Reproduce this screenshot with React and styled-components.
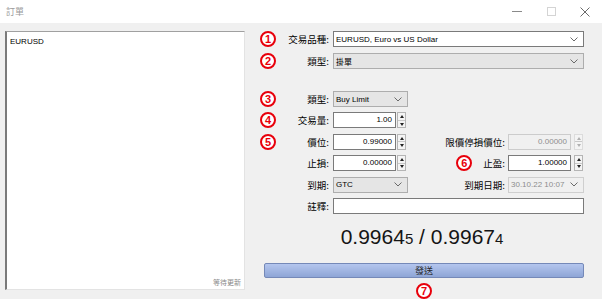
import React from "react";
import styled, { createGlobalStyle } from "styled-components";

const Global = createGlobalStyle`
  html, body { margin: 0; padding: 0; background: #fff; }
  body { width: 602px; height: 308px; overflow: hidden; font-family: "Liberation Sans", Arial, sans-serif; }
`;

const CJK = `"Noto Sans CJK TC", "Noto Sans CJK SC", sans-serif`;

const Window = styled.div`
  width: 602px;
  height: 308px;
  display: flex;
  flex-direction: column;
  background: #fff;
`;

const TitleBar = styled.div`
  height: 23px;
  flex: none;
  display: flex;
  align-items: center;
  padding-left: 6px;
`;

const Title = styled.div`
  font-family: ${CJK};
  font-size: 9px;
  color: #9a9a9a;
  flex: 1;
  line-height: 1;
`;

const Controls = styled.div`
  display: flex;
  height: 100%;
`;

const Ctrl = styled.div`
  width: 34px;
  height: 100%;
  display: flex;
  align-items: center;
  justify-content: center;
`;

const MinLine = styled.div`
  width: 10px;
  height: 1px;
  background: #8a8a8a;
`;

const MaxBox = styled.div`
  width: 7px;
  height: 7px;
  border: 1px solid #d4d4d4;
`;

const Body = styled.div`
  height: 276px;
  flex: none;
  background: #f0f0f0;
  display: flex;
  gap: 15px;
  padding: 8px 18px 0 5px;
  box-sizing: border-box;
`;

const SymbolList = styled.div`
  width: 240px;
  height: 259px;
  flex: none;
  box-sizing: border-box;
  background: #fff;
  border-top: 1px solid #a0a0a0;
  border-left: 2px solid #7a7a7a;
  border-right: 1px solid #e3e3e3;
  border-bottom: 1px solid #e3e3e3;
  display: flex;
  flex-direction: column;
  justify-content: space-between;
  padding: 5px 3px 2px 3px;
`;

const ListItem = styled.div`
  font-size: 8px;
  color: #000;
  line-height: 10px;
`;

const ListStatus = styled.div`
  font-family: ${CJK};
  font-size: 7px;
  color: #8a8a8a;
  text-align: right;
  line-height: 9px;
`;

const Form = styled.div`
  flex: 1;
  display: flex;
  flex-direction: column;
  min-width: 0;
`;

const Group = styled.div`
  display: flex;
  flex-direction: column;
  gap: ${(p) => p.$gap}px;
  margin-top: ${(p) => p.$mt || 0}px;
`;

const Row = styled.div`
  display: flex;
  align-items: center;
  height: 16px;
`;

const LeftCell = styled.div`
  display: flex;
  align-items: center;
  width: 148px;
  flex: none;
`;

const MarkerSlot = styled.div`
  width: 16px;
  flex: none;
  display: flex;
  justify-content: center;
`;

const Marker = styled.div`
  width: 12px;
  height: 12px;
  border: 2px solid #e8000b;
  border-radius: 50%;
  background: #fff;
  color: #e8000b;
  font-family: "Liberation Sans", Arial, sans-serif;
  font-weight: bold;
  font-size: 11px;
  line-height: 12px;
  text-align: center;
  flex: none;
`;

const Label = styled.div`
  width: 53px;
  margin-right: 4px;
  flex: none;
  text-align: right;
  font-family: ${CJK};
  font-size: 9.5px;
  color: #000;
  white-space: nowrap;
  line-height: 16px;
`;

const RightLabel = styled.div`
  width: 97px;
  margin-right: 3px;
  flex: none;
  display: flex;
  justify-content: flex-end;
  align-items: center;
  gap: 11px;
  font-family: ${CJK};
  font-size: 9.5px;
  color: #000;
  white-space: nowrap;
  line-height: 16px;
`;

const Select = styled.div`
  height: 16px;
  box-sizing: border-box;
  width: ${(p) => (p.$w ? `${p.$w}px` : "auto")};
  flex: ${(p) => (p.$w ? "none" : 1)};
  display: flex;
  align-items: center;
  justify-content: space-between;
  padding: 0 5px 0 2px;
  font-size: 8px;
  font-family: ${(p) => (p.$cjk ? CJK : `"Liberation Sans", Arial, sans-serif`)};
  color: ${(p) => (p.$disabled ? "#8d8d8d" : "#000")};
  background: ${(p) => (p.$white ? "#fff" : p.$disabled ? "#f0f0f0" : "#e5e5e5")};
  border: 1px solid ${(p) => (p.$white ? "#7a7a7a" : p.$disabled ? "#cfcfcf" : "#adadad")};
  white-space: nowrap;
`;

const Chevron = () => (
  <svg width="8" height="5" viewBox="0 0 8 5" style={{ flex: "none" }}>
    <polyline points="0.5,0.5 4,4 7.5,0.5" fill="none" stroke="#6a6a6a" strokeWidth="1" />
  </svg>
);

const TextBox = styled.div`
  height: 16px;
  box-sizing: border-box;
  width: ${(p) => (p.$w ? `${p.$w}px` : "auto")};
  flex: ${(p) => (p.$w ? "none" : 1)};
  background: ${(p) => (p.$disabled ? "#f0f0f0" : "#fff")};
  border: 1px solid ${(p) => (p.$disabled ? "#cccccc" : "#7a7a7a")};
  color: ${(p) => (p.$disabled ? "#8d8d8d" : "#000")};
  font-size: 8px;
  line-height: 14px;
  text-align: right;
  padding-right: 3px;
`;

const Spinner = styled.div`
  width: 9px;
  height: 16px;
  box-sizing: border-box;
  margin-left: ${(p) => p.$ml}px;
  flex: none;
  display: flex;
  flex-direction: column;
  border: 1px solid ${(p) => (p.$disabled ? "#dcdcdc" : "#b5b5b5")};
  background: #f4f4f4;
`;

const SpinHalf = styled.div`
  flex: 1;
  display: flex;
  align-items: center;
  justify-content: center;
  border-top: ${(p) => (p.$down ? "1px solid #c8c8c8" : "none")};
`;

const Tri = styled.div`
  width: 0;
  height: 0;
  border-left: 2.5px solid transparent;
  border-right: 2.5px solid transparent;
  ${(p) =>
    p.$down
      ? `border-top: 3px solid ${p.$disabled ? "#b0b0b0" : "#222"};`
      : `border-bottom: 3px solid ${p.$disabled ? "#b0b0b0" : "#222"};`}
`;

const Spin = ({ ml = 2, disabled }) => (
  <Spinner $ml={ml} $disabled={disabled}>
    <SpinHalf>
      <Tri $disabled={disabled} />
    </SpinHalf>
    <SpinHalf $down>
      <Tri $down $disabled={disabled} />
    </SpinHalf>
  </Spinner>
);

const Price = styled.div`
  margin-top: 11px;
  height: 24px;
  line-height: 24px;
  text-align: center;
  font-size: 21px;
  color: #151515;
  white-space: nowrap;
`;

const Small = styled.span`
  font-size: 15px;
`;

const SendButton = styled.div`
  margin-top: 14px;
  margin-left: 4px;
  height: 17px;
  box-sizing: border-box;
  border: 1px solid #7589b8;
  border-radius: 2px;
  background: linear-gradient(#b4c6ee, #8ea5d6);
  display: flex;
  align-items: center;
  justify-content: center;
  font-family: ${CJK};
  font-size: 9px;
  color: #1e1e1e;
`;

const BottomMarker = styled.div`
  margin-top: 5px;
  margin-left: 4px;
  display: flex;
  justify-content: center;
  position: relative;
  z-index: 1;
`;

const M = ({ n }) => <Marker>{n}</Marker>;

export default function App() {
  return (
    <>
      <Global />
      <Window>
        <TitleBar>
          <Title>訂單</Title>
          <Controls>
            <Ctrl>
              <MinLine />
            </Ctrl>
            <Ctrl>
              <MaxBox />
            </Ctrl>
            <Ctrl>
              <svg width="10" height="10" viewBox="0 0 10 10">
                <path d="M0.5 0.5 L9.5 9.5 M9.5 0.5 L0.5 9.5" stroke="#6a6a6a" strokeWidth="1" />
              </svg>
            </Ctrl>
          </Controls>
        </TitleBar>
        <Body>
          <SymbolList>
            <ListItem>EURUSD</ListItem>
            <ListStatus>等待更新</ListStatus>
          </SymbolList>
          <Form>
            <Group $gap={6}>
              <Row>
                <MarkerSlot><M n="1" /></MarkerSlot>
                <Label>交易品種:</Label>
                <Select $white>
                  <span>EURUSD, Euro vs US Dollar</span>
                  <Chevron />
                </Select>
              </Row>
              <Row>
                <MarkerSlot><M n="2" /></MarkerSlot>
                <Label>類型:</Label>
                <Select $cjk>
                  <span>掛單</span>
                  <Chevron />
                </Select>
              </Row>
            </Group>
            <Group $gap={5.4} $mt={22}>
              <Row>
                <MarkerSlot><M n="3" /></MarkerSlot>
                <Label>類型:</Label>
                <Select $w={75}>
                  <span>Buy Limit</span>
                  <Chevron />
                </Select>
              </Row>
              <Row>
                <MarkerSlot><M n="4" /></MarkerSlot>
                <Label>交易量:</Label>
                <TextBox $w={63}>1.00</TextBox>
                <Spin ml={1} />
              </Row>
              <Row>
                <LeftCell>
                  <MarkerSlot><M n="5" /></MarkerSlot>
                  <Label>價位:</Label>
                  <TextBox $w={63}>0.99000</TextBox>
                  <Spin ml={1} />
                </LeftCell>
                <RightLabel>限價停損價位:</RightLabel>
                <TextBox $w={63} $disabled>0.00000</TextBox>
                <Spin ml={3} disabled />
              </Row>
              <Row>
                <LeftCell>
                  <MarkerSlot />
                  <Label>止損:</Label>
                  <TextBox $w={63}>0.00000</TextBox>
                  <Spin ml={1} />
                </LeftCell>
                <RightLabel>
                  <M n="6" />
                  <span>止盈:</span>
                </RightLabel>
                <TextBox $w={63}>1.00000</TextBox>
                <Spin ml={3} />
              </Row>
              <Row>
                <LeftCell>
                  <MarkerSlot />
                  <Label>到期:</Label>
                  <Select $w={75}>
                    <span>GTC</span>
                    <Chevron />
                  </Select>
                </LeftCell>
                <RightLabel>到期日期:</RightLabel>
                <Select $w={76} $disabled>
                  <span>30.10.22 10:07</span>
                  <Chevron />
                </Select>
              </Row>
              <Row>
                <MarkerSlot />
                <Label>註釋:</Label>
                <TextBox />
              </Row>
            </Group>
            <Price>
              0.9964<Small>5</Small> / 0.9967<Small>4</Small>
            </Price>
            <SendButton>發送</SendButton>
            <BottomMarker>
              <M n="7" />
            </BottomMarker>
          </Form>
        </Body>
      </Window>
    </>
  );
}
